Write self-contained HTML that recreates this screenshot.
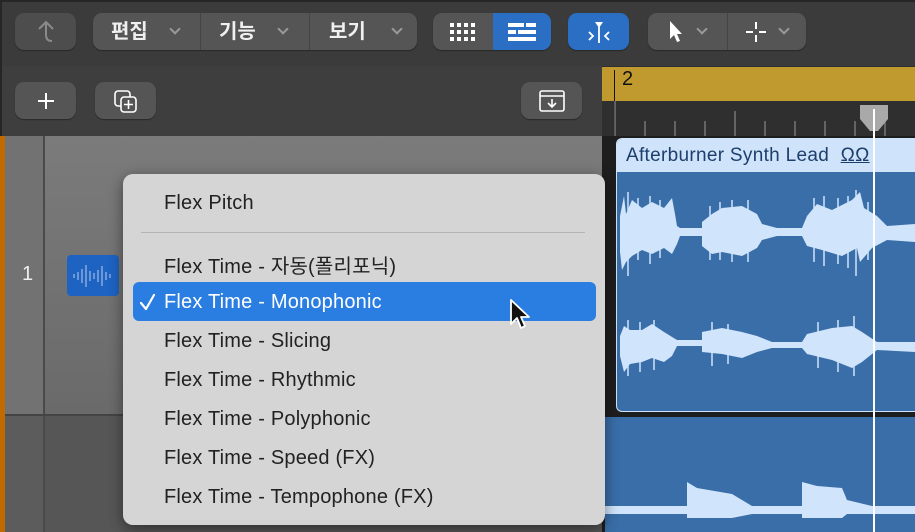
<!DOCTYPE html>
<html><head><meta charset="utf-8"><style>
*{margin:0;padding:0;box-sizing:border-box}
body{width:915px;height:532px;overflow:hidden;background:#3b3b3b;font-family:"Liberation Sans","Noto Sans CJK KR",sans-serif;position:relative}
.a{position:absolute}
.btn{position:absolute;background:#555;border-radius:9px;box-shadow:0 1px 1px rgba(0,0,0,.35)}
.kr{color:#f0f0f0;font-size:20px;font-weight:bold;position:absolute;top:4px;line-height:30px}
.chev{position:absolute;top:17px;width:8px;height:8px;border-right:2px solid #9a9a9a;border-bottom:2px solid #9a9a9a;transform:rotate(45deg)}
.sep{position:absolute;top:0;width:1px;height:37px;background:#444}
.mi{position:absolute;left:164px;font-size:20px;color:#222;letter-spacing:.2px}
</style></head><body>
<div class="a" style="left:0;top:0;width:915px;height:2px;background:#262626"></div>
<div class="a" style="left:0;top:0;width:2px;height:532px;background:#262626"></div>
<div class="btn" style="left:15px;top:13px;width:61px;height:37px;background:#4d4d4d">
<svg class="a" style="left:20px;top:7px" width="22" height="24" viewBox="0 0 22 24"><path d="M4 9 L11 2 L18 9 M11 2 V15 Q11 21 17 21" fill="none" stroke="#8a8a8a" stroke-width="2"/></svg></div>
<div class="btn" style="left:93px;top:13px;width:324px;height:37px">
<span class="kr" style="left:18px">편집</span><div class="chev" style="left:78px;top:12px"></div>
<div class="sep" style="left:107px"></div>
<span class="kr" style="left:126px">기능</span><div class="chev" style="left:186px;top:12px"></div>
<div class="sep" style="left:216px"></div>
<span class="kr" style="left:236px">보기</span><div class="chev" style="left:300px;top:12px"></div>
</div>
<div class="btn" style="left:433px;top:13px;width:118px;height:37px">
<svg class="a" style="left:17px;top:10px" width="26" height="18"><g fill="#fff"><rect x="0" y="0" width="4" height="4"/><rect x="7" y="0" width="4" height="4"/><rect x="14" y="0" width="4" height="4"/><rect x="21" y="0" width="4" height="4"/><rect x="0" y="7" width="4" height="4"/><rect x="7" y="7" width="4" height="4"/><rect x="14" y="7" width="4" height="4"/><rect x="21" y="7" width="4" height="4"/><rect x="0" y="14" width="4" height="4"/><rect x="7" y="14" width="4" height="4"/><rect x="14" y="14" width="4" height="4"/><rect x="21" y="14" width="4" height="4"/></g></svg>
<div class="a" style="left:60px;top:0;width:58px;height:37px;background:#2a6fc4;border-radius:0 9px 9px 0">
<svg class="a" style="left:15px;top:10px" width="28" height="18"><g fill="#fff"><rect x="0" y="0" width="16" height="4"/><rect x="18" y="0" width="10" height="4"/><rect x="0" y="7" width="8" height="4"/><rect x="10" y="7" width="18" height="4"/><rect x="0" y="14" width="28" height="4"/></g></svg></div>
</div>
<div class="btn" style="left:568px;top:13px;width:61px;height:37px;background:#2a6fc4">
<svg class="a" style="left:16px;top:6px" width="30" height="26"><path d="M11 3 H19 L15 9 Z" fill="#fff"/><path d="M15 8 V24 M5 13 L9 17 L5 21 M25 13 L21 17 L25 21" fill="none" stroke="#fff" stroke-width="1.8"/></svg></div>
<div class="btn" style="left:648px;top:13px;width:158px;height:37px">
<svg class="a" style="left:20px;top:7px" width="16" height="24"><path d="M2 1 V19 L6 15 L9 22 L12 21 L9 14 L14 14 Z" fill="#fff"/></svg>
<div class="chev" style="left:50px;top:12px"></div>
<div class="sep" style="left:79px"></div>
<svg class="a" style="left:97px;top:8px" width="22" height="22"><path d="M11 1 V8 M11 14 V21 M1 11 H8 M14 11 H21" stroke="#fff" stroke-width="2"/></svg>
<div class="chev" style="left:132px;top:12px"></div>
</div>
<div class="a" style="left:2px;top:66px;width:600px;height:70px;background:#3e3e3e"></div>
<div class="btn" style="left:15px;top:82px;width:61px;height:37px">
<svg class="a" style="left:20px;top:8px" width="22" height="22"><path d="M11 3 V19 M3 11 H19" stroke="#fff" stroke-width="2"/></svg></div>
<div class="btn" style="left:95px;top:82px;width:61px;height:37px">
<svg class="a" style="left:18px;top:7px" width="26" height="24"><rect x="2" y="2" width="15" height="15" rx="3" fill="none" stroke="#fff" stroke-width="1.6"/><rect x="8" y="8" width="15" height="15" rx="3" fill="#555" stroke="#fff" stroke-width="1.6"/><path d="M15.5 11 V20 M11 15.5 H20" stroke="#fff" stroke-width="1.6"/></svg></div>
<div class="btn" style="left:521px;top:82px;width:61px;height:37px">
<svg class="a" style="left:17px;top:7px" width="28" height="24"><rect x="2" y="2" width="24" height="20" rx="2" fill="none" stroke="#fff" stroke-width="1.6"/><path d="M2 7 H26 M14 10 V18 M10 14 L14 18 L18 14" fill="none" stroke="#fff" stroke-width="1.6"/></svg></div>
<div class="a" style="left:602px;top:66px;width:313px;height:70px;background:#2f2f2f"></div>
<div class="a" style="left:602px;top:67px;width:313px;height:34px;background:#c09a2e"></div>
<div class="a" style="left:614px;top:70px;width:1px;height:66px;background:#111"></div>
<div class="a" style="left:622px;top:68px;font-size:20px;color:#111">2</div>
<svg class="a" style="left:602px;top:101px" width="313" height="35"><g stroke="#888" stroke-width="1.2"><path d="M13 0 V35 M43 20 V35 M73 20 V35 M103 20 V35 M133 10 V35 M163 20 V35 M193 20 V35 M223 20 V35 M253 20 V35 M283 20 V35"/></g></svg>
<div class="a" style="left:0;top:136px;width:5px;height:396px;background:#c26a00"></div>
<div class="a" style="left:5px;top:136px;width:38px;height:279px;background:#727272"></div>
<div class="a" style="left:43px;top:136px;width:2px;height:396px;background:#4a4a4a"></div>
<div class="a" style="left:45px;top:136px;width:557px;height:279px;background:linear-gradient(180deg,#7b7b7b,#6a6a6a)"></div>
<div class="a" style="left:5px;top:414px;width:597px;height:2px;background:#444"></div>
<div class="a" style="left:5px;top:416px;width:38px;height:116px;background:#5c5c5c"></div>
<div class="a" style="left:45px;top:416px;width:557px;height:116px;background:#565656"></div>
<div class="a" style="left:22px;top:263px;font-size:20px;color:#eee">1</div>
<div class="a" style="left:67px;top:255px;width:52px;height:41px;background:#1e63c2;border-radius:4px">
<svg class="a" style="left:4px;top:6px" width="44" height="30"><g stroke="#7fa6dd" stroke-width="1.6"><path d="M3 13 V17 M7 11 V19 M11 8 V22 M15 4 V26 M19 10 V20 M23 12 V18 M27 9 V21 M31 5 V25 M35 11 V19 M39 13 V17"/></g></svg></div>
<div class="a" style="left:602px;top:136px;width:313px;height:396px;background:#1e1e1e"></div>
<div class="a" style="left:616px;top:138px;width:299px;height:274px;background:#3a6ea8;border:1.5px solid #cfe3fb;border-right:none;border-radius:6px 0 0 6px"></div>
<div class="a" style="left:617px;top:139px;width:298px;height:33px;background:#cfe3fb;border-radius:5px 0 0 0"></div>
<div class="a" style="left:626px;top:145px;font-size:19px;color:#1d3f6b;letter-spacing:.3px">Afterburner Synth Lead <span style="text-decoration:underline;margin-left:6px">ΩΩ</span></div>
<div class="a" style="left:605px;top:417px;width:310px;height:115px;background:#3a6ea8"></div>
<svg class="a" style="left:602px;top:136px" width="313" height="396">
<g fill="#d0e4fb">
<path d="M18 80 L22 60 L24 78 L30 64 L40 72 L50 66 L62 72 L70 62 L73 78 L75 90 L78 92 L100 92 L100 86 L110 78 L120 72 L140 70 L155 78 L160 88 L175 92 L200 92 L205 80 L215 68 L230 74 L250 64 L258 56 L262 72 L275 80 L285 90 L313 88 L313 106 L285 104 L270 112 L258 126 L255 112 L240 120 L220 114 L205 110 L200 100 L175 100 L160 104 L155 112 L140 120 L120 116 L110 118 L100 110 L100 100 L78 100 L75 108 L70 118 L62 112 L50 118 L40 114 L30 120 L24 126 L20 134 L18 116 Z"/>
<path d="M18 200 L22 190 L28 194 L40 194 L50 188 L62 196 L75 204 L100 204 L100 196 L120 192 L140 196 L155 200 L170 206 L200 206 L205 198 L230 192 L250 190 L260 196 L275 206 L313 206 L313 216 L275 214 L260 226 L250 232 L230 224 L205 218 L200 212 L170 212 L155 216 L140 222 L120 218 L100 216 L100 210 L75 210 L70 220 L62 226 L50 222 L40 226 L28 228 L22 236 L18 220 Z"/>
<path transform="translate(0,-14)" d="M3 384 L85 384 L85 360 L95 366 L130 372 L140 378 L150 384 L200 384 L200 360 L215 364 L240 366 L245 378 L270 384 L313 384 L313 392 L245 392 L240 396 L200 396 L200 392 L150 392 L140 394 L130 396 L85 396 L85 392 L3 392 Z"/>
</g>
<g stroke="#d0e4fb" stroke-width="1.5">
<path d="M26 56 V140 M36 62 V124 M48 60 V128 M58 64 V122 M108 70 V124 M118 66 V124 M130 64 V126 M146 64 V126 M212 62 V126 M222 60 V130 M236 62 V128 M246 60 V132 M254 54 V140 M266 66 V124"/>
<path d="M26 184 V240 M38 186 V236 M52 184 V234 M110 186 V230 M126 188 V228 M216 186 V232 M236 184 V236 M252 180 V240"/>
</g></svg>
<div class="a" style="left:873px;top:118px;width:2px;height:414px;background:#fff"></div>
<svg class="a" style="left:858px;top:103px" width="32" height="30"><path d="M2 2 H30 V16 L20 28 H12 L2 16 Z" fill="#a9a9a9"/><rect x="15" y="6" width="2" height="24" fill="#fff"/></svg>
<div class="a" style="left:123px;top:174px;width:482px;height:351px;background:#d5d5d5;border-radius:10px;box-shadow:0 4px 14px rgba(0,0,0,.45)"></div>
<div class="mi" style="top:192px">Flex Pitch</div>
<div class="a" style="left:141px;top:232px;width:444px;height:1px;background:#b5b5b5"></div>
<div class="mi" style="top:250px">Flex Time - 자동(폴리포닉)</div>
<div class="a" style="left:133px;top:282px;width:463px;height:39px;background:#2a7de1;border-radius:6px"></div>
<svg class="a" style="left:139px;top:292px" width="18" height="20"><path d="M2 11 L7 17 L15 3" fill="none" stroke="#fff" stroke-width="2.2" stroke-linecap="round" stroke-linejoin="round"/></svg>
<div class="mi" style="top:291px;color:#fff">Flex Time - Monophonic</div>
<div class="mi" style="top:330px">Flex Time - Slicing</div>
<div class="mi" style="top:369px">Flex Time - Rhythmic</div>
<div class="mi" style="top:408px">Flex Time - Polyphonic</div>
<div class="mi" style="top:447px">Flex Time - Speed (FX)</div>
<div class="mi" style="top:486px">Flex Time - Tempophone (FX)</div>
<svg class="a" style="left:509px;top:298px" width="26" height="34"><path d="M2 2 V26 L8 20 L12 30 L16 28 L12 19 L20 19 Z" fill="#111" stroke="#fff" stroke-width="1.8" stroke-linejoin="round"/></svg>
</body></html>
